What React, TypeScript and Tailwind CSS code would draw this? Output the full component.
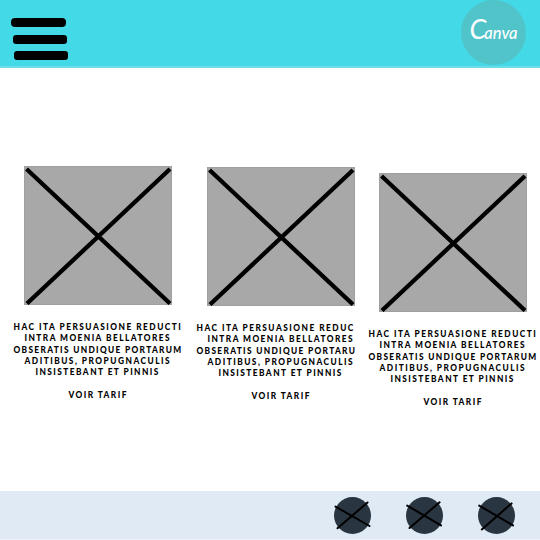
type Line = { text: string; className: string };

const closing: Line[] = [
  { text: "ADITIBUS, PROPUGNACULIS", className: "ml-[11.5px] tracking-[1.5px]" },
  { text: "INSISTEBANT ET PINNIS", className: "ml-[22.5px] tracking-[1.45px]" },
];

function TextLine({ text, className }: Line) {
  return (
    <p className="h-[11.3px]">
      <span className={`inline-block scale-y-[1.16] ${className}`}>{text}</span>
    </p>
  );
}

function Card({ first, third, className }: { first: string; third: string; className: string }) {
  return (
    <article className={`w-[172px] shrink-0 ${className}`}>
      <svg className="ml-[11px] block" width="148" height="139" viewBox="0 0 148 139">
        <rect x="0.5" y="0.5" width="147" height="138" fill="#a8a8a8" stroke="#a0a0a0" />
        <path d="M2.5 3 L146 137.5 M146 3 L3 137.5" stroke="#000" strokeWidth="4.3" />
      </svg>
      <div className="mt-[17px] whitespace-nowrap font-['Lato','Liberation_Sans',sans-serif] text-[8.3px] leading-[11.3px] font-black text-black">
        <TextLine text={first} className="ml-[0.5px] tracking-[1.5px]" />
        <TextLine text="INTRA MOENIA BELLATORES" className="ml-[11.5px] tracking-[1.45px]" />
        <TextLine text={third} className="ml-[0.5px] tracking-[1.34px]" />
        {closing.map((l) => (
          <TextLine key={l.text} {...l} />
        ))}
        <div className="h-[11.3px]" />
        <TextLine text="VOIR TARIF" className="ml-[55.5px] tracking-[1.45px]" />
      </div>
    </article>
  );
}

function FooterIcon({ className, cross }: { className: string; cross: string }) {
  return (
    <svg className={`shrink-0 ${className}`} width="37" height="37" viewBox="0 0 37 37" overflow="visible">
      <circle cx="18.5" cy="18.5" r="18.5" fill="#293541" />
      <path d={cross} stroke="#000" strokeWidth="2" strokeLinecap="round" />
    </svg>
  );
}

export default function App() {
  return (
    <div className="flex h-[540px] w-[540px] flex-col overflow-hidden bg-white">
      <header className="flex h-[68px] shrink-0 items-start justify-between border-b-2 border-[#6bdce8] bg-[#43d9e7]">
        <button aria-label="Menu" className="ml-[11px] mt-[18px] flex flex-col">
          <span className="h-[9px] w-[55px] rounded-[4px] bg-black" />
          <span className="ml-[2px] mt-[8px] h-[9px] w-[54px] rounded-[3px] bg-black" />
          <span className="ml-[3px] mt-[7px] h-[9px] w-[54px] rounded-[3px] bg-black" />
        </button>
        <div className="mr-[14px] flex h-[65px] w-[65px] justify-center rounded-full bg-[#51c4ca] font-['Lato','Liberation_Sans',sans-serif] italic text-white">
          <span className="mt-[16px] flex h-[26px] items-baseline leading-[26px]">
            <span className="text-[27px]">C</span>
            <span className="-ml-[2px] text-[16.5px] font-medium">anva</span>
          </span>
        </div>
      </header>
      <main className="flex h-[423px] shrink-0 items-start">
        <Card className="ml-[13px] mt-[98px]" first="HAC ITA PERSUASIONE REDUCTI" third="OBSERATIS UNDIQUE PORTARUM" />
        <Card className="ml-[11px] mt-[99px]" first="HAC ITA PERSUASIONE REDUC" third="OBSERATIS UNDIQUE PORTARU" />
        <Card className="mt-[105px]" first="HAC ITA PERSUASIONE REDUCTI" third="OBSERATIS UNDIQUE PORTARUM" />
      </main>
      <footer className="flex h-[49px] shrink-0 items-start border-b border-[#f0f4fa] bg-[#e0eaf5] pl-[334px]">
        <FooterIcon className="mt-[6px]" cross="M1.5 9.6 L35.5 29 M33.5 5.5 L3.5 31.3" />
        <FooterIcon className="ml-[35px] mt-[6px]" cross="M1.2 8.6 L35 28.4 M33.6 5.3 L3.5 31" />
        <FooterIcon className="ml-[35px] mt-[6px]" cross="M1.2 8.6 L35 28.4 M33.6 6.4 L3.8 32.4" />
      </footer>
    </div>
  );
}
